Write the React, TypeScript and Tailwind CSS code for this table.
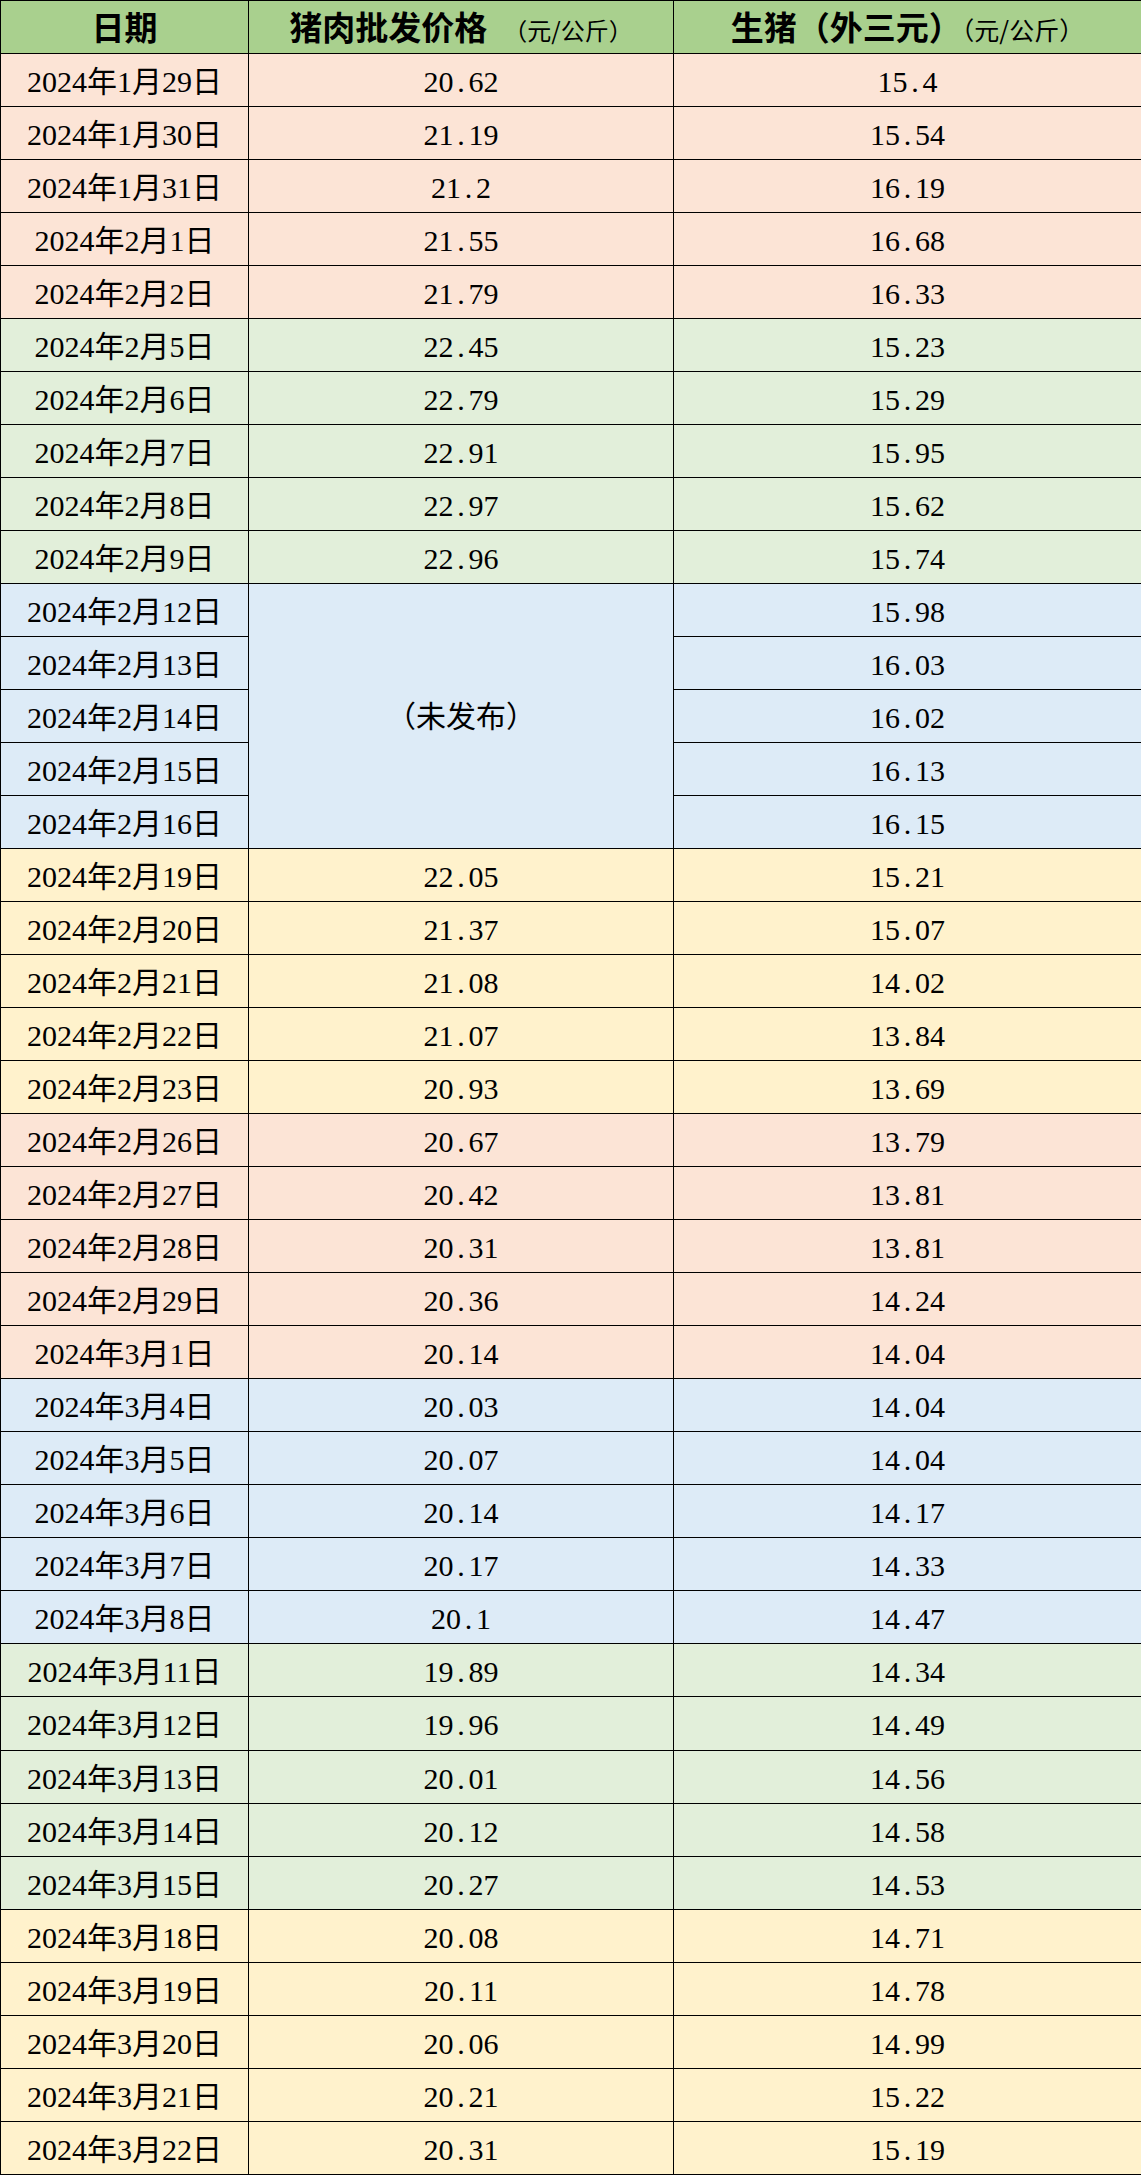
import React from "react";

type Row = { date: string; pork: string | null; hog: string; bg: string };

const PINK = "bg-[#fce4d6]";
const GREEN = "bg-[#e2efda]";
const BLUE = "bg-[#ddebf7]";
const YELLOW = "bg-[#fff2cc]";

const groups: { bg: string; rows: [string, string | null, string][] }[] = [
  {
    bg: PINK,
    rows: [
      ["2024年1月29日", "20.62", "15.4"],
      ["2024年1月30日", "21.19", "15.54"],
      ["2024年1月31日", "21.2", "16.19"],
      ["2024年2月1日", "21.55", "16.68"],
      ["2024年2月2日", "21.79", "16.33"],
    ],
  },
  {
    bg: GREEN,
    rows: [
      ["2024年2月5日", "22.45", "15.23"],
      ["2024年2月6日", "22.79", "15.29"],
      ["2024年2月7日", "22.91", "15.95"],
      ["2024年2月8日", "22.97", "15.62"],
      ["2024年2月9日", "22.96", "15.74"],
    ],
  },
  {
    bg: BLUE,
    rows: [
      ["2024年2月12日", null, "15.98"],
      ["2024年2月13日", null, "16.03"],
      ["2024年2月14日", null, "16.02"],
      ["2024年2月15日", null, "16.13"],
      ["2024年2月16日", null, "16.15"],
    ],
  },
  {
    bg: YELLOW,
    rows: [
      ["2024年2月19日", "22.05", "15.21"],
      ["2024年2月20日", "21.37", "15.07"],
      ["2024年2月21日", "21.08", "14.02"],
      ["2024年2月22日", "21.07", "13.84"],
      ["2024年2月23日", "20.93", "13.69"],
    ],
  },
  {
    bg: PINK,
    rows: [
      ["2024年2月26日", "20.67", "13.79"],
      ["2024年2月27日", "20.42", "13.81"],
      ["2024年2月28日", "20.31", "13.81"],
      ["2024年2月29日", "20.36", "14.24"],
      ["2024年3月1日", "20.14", "14.04"],
    ],
  },
  {
    bg: BLUE,
    rows: [
      ["2024年3月4日", "20.03", "14.04"],
      ["2024年3月5日", "20.07", "14.04"],
      ["2024年3月6日", "20.14", "14.17"],
      ["2024年3月7日", "20.17", "14.33"],
      ["2024年3月8日", "20.1", "14.47"],
    ],
  },
  {
    bg: GREEN,
    rows: [
      ["2024年3月11日", "19.89", "14.34"],
      ["2024年3月12日", "19.96", "14.49"],
      ["2024年3月13日", "20.01", "14.56"],
      ["2024年3月14日", "20.12", "14.58"],
      ["2024年3月15日", "20.27", "14.53"],
    ],
  },
  {
    bg: YELLOW,
    rows: [
      ["2024年3月18日", "20.08", "14.71"],
      ["2024年3月19日", "20.11", "14.78"],
      ["2024年3月20日", "20.06", "14.99"],
      ["2024年3月21日", "20.21", "15.22"],
      ["2024年3月22日", "20.31", "15.19"],
    ],
  },
];

const rows: Row[] = groups.flatMap((g) =>
  g.rows.map(([date, pork, hog]) => ({ date, pork, hog, bg: g.bg }))
);

// SimSun-style numbers: the dot takes half an em
function Num({ value }: { value: string }) {
  const [int, frac] = value.split(".");
  return (
    <span>
      {int}
      {frac !== undefined && (
        <>
          <span className="inline-block w-[0.5em]">.</span>
          {frac}
        </>
      )}
    </span>
  );
}

const cell = "border-[1.5px] border-black text-center align-middle p-0";

export default function App() {
  return (
    <div className="w-[1141px] bg-white">
      <table
        className="w-[1141px] border-collapse table-fixed text-black"
        style={{ fontFamily: "'Liberation Serif', 'Noto Sans CJK SC', serif" }}
      >
        <colgroup>
          <col className="w-[248px]" />
          <col className="w-[425px]" />
          <col className="w-[468px]" />
        </colgroup>
        <thead>
          <tr className="h-[53px] bg-[#a9d08e] font-['Noto_Sans_CJK_SC',sans-serif]">
            <th className={`${cell} text-[33px] font-bold`}>日期</th>
            <th className={cell}>
              <span className="text-[33px] font-bold">猪肉批发价格</span>
              <span className="ml-4 text-[24px] font-normal">（元/公斤）</span>
            </th>
            <th className={cell}>
              <span className="text-[33px] font-bold">生猪（外三元）</span>
              <span className="text-[25px] font-normal">（元/公斤）</span>
            </th>
          </tr>
        </thead>
        <tbody className="text-[30px]">
          {rows.map((r, i) => (
            <tr key={r.date} className={`h-[53.03px] ${r.bg}`}>
              <td className={`${cell} pt-[3px]`}>{r.date}</td>
              {r.pork !== null ? (
                <td className={`${cell} pt-[3px]`}>
                  <Num value={r.pork} />
                </td>
              ) : rows[i - 1]?.pork !== null ? (
                <td className={cell} rowSpan={5}>
                  （未发布）
                </td>
              ) : null}
              <td className={`${cell} pt-[3px]`}>
                <Num value={r.hog} />
              </td>
            </tr>
          ))}
        </tbody>
      </table>
    </div>
  );
}
